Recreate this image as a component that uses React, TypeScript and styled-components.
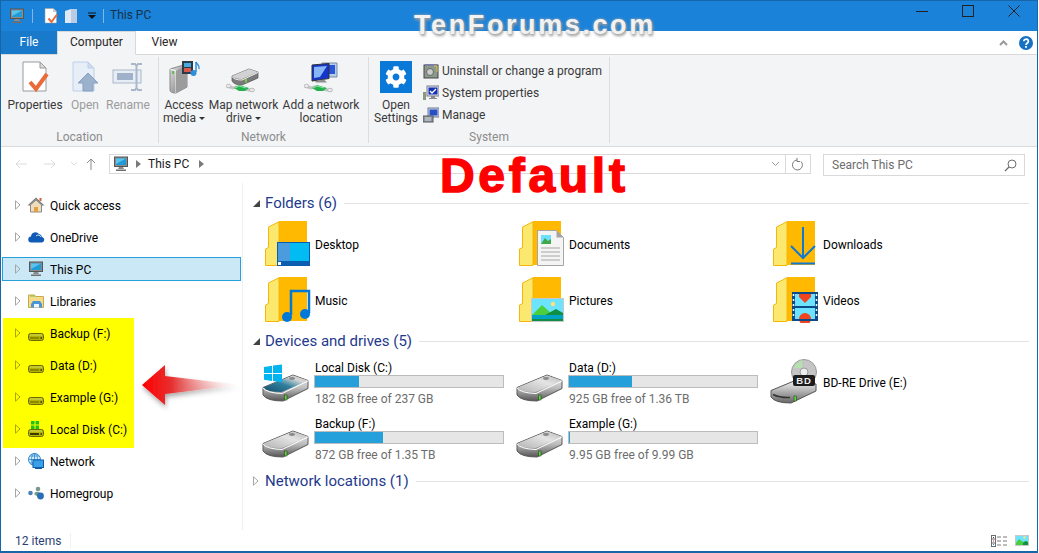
import React from 'react';
import styled, { createGlobalStyle } from 'styled-components';
import { FaCog } from 'react-icons/fa';

const GlobalStyle = createGlobalStyle`
  html, body { margin: 0; padding: 0; background: #fff; }
  * { box-sizing: border-box; }
  svg { display: block; flex: none; }
`;

const Win = styled.div`
  position: relative;
  width: 1038px;
  height: 553px;
  overflow: hidden;
  display: flex;
  flex-direction: column;
  background: #fff;
  border-style: solid;
  border-color: #1766a8;
  border-width: 1px 1px 2px 1px;
  font-family: Roboto, "Noto Sans", sans-serif;
  font-size: 12px;
  color: #000;
`;

const TitleBar = styled.div`
  height: 30px;
  flex: none;
  display: flex;
  align-items: center;
  background: #1a82d9;
  padding-left: 8px;
`;
const TitleSep = styled.div`
  width: 1px;
  height: 14px;
  margin: 0 10px 0 7px;
  background: #7fb6e6;
`;
const TitleIcon = styled.div<{ $ml: number }>`
  margin-left: ${p => p.$ml}px;
`;
const TitleText = styled.span`
  color: #16324a;
  font-size: 12px;
  margin: -2px 0 0 -4px;
`;
const TitleControls = styled.div`
  margin-left: auto;
  display: flex;
  height: 100%;
`;
const ControlBtn = styled.div`
  width: 46px;
  display: flex;
  align-items: flex-start;
  justify-content: center;
  padding-top: 4px;
`;

const TabRow = styled.div`
  height: 24px;
  flex: none;
  display: flex;
  align-items: stretch;
  border-bottom: 1px solid #d9d9d9;
`;
const FileTab = styled.div`
  width: 56px;
  background: #1979ca;
  color: #fff;
  display: flex;
  align-items: center;
  justify-content: center;
  padding-bottom: 2px;
`;
const Tab = styled.div<{ $active?: boolean; $w: number }>`
  width: ${p => p.$w}px;
  height: ${p => (p.$active ? 24 : 23)}px;
  display: flex;
  align-items: center;
  justify-content: center;
  color: #262626;
  padding-bottom: 2px;
  border: ${p => (p.$active ? '1px solid #d9d9d9' : 'none')};
  border-bottom: ${p => (p.$active ? '1px solid #f3f4f6' : 'none')};
  background: ${p => (p.$active ? '#f3f4f6' : '#fff')};
`;
const TabTools = styled.div`
  margin-left: auto;
  display: flex;
  align-items: center;
  gap: 11px;
  padding-right: 4px;
`;

const Ribbon = styled.div`
  height: 92px;
  flex: none;
  display: flex;
  background: #f3f4f6;
  border-bottom: 1px solid #d9dadc;
  padding-top: 2px;
`;
const RGroup = styled.div<{ $w: number; $pl?: number }>`
  width: ${p => p.$w}px;
  height: 86px;
  display: flex;
  flex-direction: column;
  border-right: 1px solid #dcdddf;
  padding-left: ${p => p.$pl ?? 0}px;
`;
const RItems = styled.div`
  flex: 1;
  display: flex;
  align-items: flex-start;
  padding-top: 4px;
`;
const RLabel = styled.div<{ $ml?: number }>`
  height: 14px;
  margin-left: ${p => p.$ml ?? 0}px;
  text-align: center;
  color: #8c8c8c;
  line-height: 16px;
`;
const RBtn = styled.div<{ $w: number; $off?: boolean }>`
  width: ${p => p.$w}px;
  display: flex;
  flex-direction: column;
  align-items: center;
  color: ${p => (p.$off ? '#9b9b9b' : '#3a3a3a')};
  line-height: 13px;
  text-align: center;
  white-space: nowrap;
`;
const RIcon = styled.div`
  height: 32px;
  margin-bottom: 6px;
  display: flex;
  align-items: center;
  justify-content: center;
`;
const Tile = styled.div`
  width: 32px;
  height: 32px;
  background: #0a78d7;
  color: #fff;
  display: flex;
  align-items: center;
  justify-content: center;
`;
const DropMark = styled.span`
  display: inline-block;
  width: 0;
  height: 0;
  margin-left: 3px;
  vertical-align: 2px;
  border-left: 3px solid transparent;
  border-right: 3px solid transparent;
  border-top: 3px solid #333;
`;
const SmallList = styled.div`
  display: flex;
  flex-direction: column;
  gap: 6px;
  margin-top: 2px;
`;
const SmallItem = styled.div`
  height: 16px;
  display: flex;
  align-items: center;
  gap: 3px;
  color: #3a3a3a;
  white-space: nowrap;
`;

const AddressRow = styled.div`
  height: 36px;
  flex: none;
  display: flex;
  align-items: flex-start;
  padding-top: 7px;
`;
const NavArrows = styled.div`
  width: 108px;
  height: 20px;
  display: flex;
  align-items: center;
  padding-left: 14px;
`;
const AddressBox = styled.div`
  width: 702px;
  height: 20px;
  display: flex;
  align-items: center;
  border: 1px solid #d9d9d9;
  padding-left: 3px;
  color: #1a1a1a;
`;
const Crumb = styled.span<{ $l: number }>`
  margin: 0 7px 0 ${p => p.$l}px;
`;
const AddressEnd = styled.div`
  margin-left: auto;
  height: 100%;
  display: flex;
  align-items: center;
`;
const AddressSep = styled.div`
  width: 1px;
  height: 20px;
  margin: 0 6px 0 5px;
  background: #d9d9d9;
`;
const Refresh = styled.div`
  margin-right: 6px;
`;
const SearchBox = styled.div`
  width: 202px;
  height: 22px;
  margin-left: 12px;
  display: flex;
  align-items: center;
  justify-content: space-between;
  border: 1px solid #d9d9d9;
  padding: 0 7px 0 8px;
  color: #6d6d6d;
`;

const Body = styled.div`
  flex: 1;
  min-height: 0;
  display: flex;
`;
const NavPane = styled.div`
  width: 242px;
  flex: none;
  padding-top: 6px;
  border-right: 1px solid #f0f0f0;
`;
const NavRow = styled.div`
  height: 32px;
  display: flex;
  align-items: center;
`;
const NavInner = styled.div<{ $selected?: boolean }>`
  width: 239px;
  height: 24px;
  margin-left: 1px;
  display: flex;
  align-items: center;
  padding-left: 12px;
  border: 1px solid ${p => (p.$selected ? '#26a0da' : 'transparent')};
  background: ${p => (p.$selected ? '#cbe8f6' : 'transparent')};
`;
const NavIconSlot = styled.div`
  width: 22px;
  margin-left: 7px;
  display: flex;
  justify-content: flex-start;
`;
const NavLabel = styled.span`
  padding-top: 2px;
`;
const YellowGroup = styled.div`
  position: relative;
  z-index: 0;
  &::before {
    content: '';
    position: absolute;
    z-index: -1;
    left: 2px;
    top: 1px;
    width: 131px;
    height: 130px;
    background: #ffff00;
  }
`;

const Main = styled.div`
  flex: 1;
  padding-top: 9px;
  padding-left: 10px;
  display: flex;
  flex-direction: column;
`;
const SectionHead = styled.div<{ $mt?: number }>`
  height: 22px;
  margin-top: ${p => p.$mt ?? 0}px;
  display: flex;
  align-items: center;
  color: #1e3a8c;
  font-size: 15px;
  flex: none;
`;
const SectionCaret = styled.div`
  width: 12px;
  display: flex;
`;
const SectionLine = styled.div`
  flex: 1;
  height: 1px;
  margin: 0 8px 0 7px;
  background: #e3e3e3;
`;
const ItemGrid = styled.div`
  display: grid;
  grid-template-columns: repeat(3, 254px);
  grid-auto-rows: 56px;
  margin: 2px 0 0 9px;
`;
const Item = styled.div`
  display: flex;
  align-items: center;
`;
const ItemIcon = styled.div<{ $folder?: boolean }>`
  width: 53px;
  padding-left: ${p => (p.$folder ? 3 : 0)}px;
  flex: none;
`;
const ItemLabel = styled.span`
  padding-top: 2px;
`;
const DriveInfo = styled.div`
  width: 190px;
  margin-left: -1px;
  padding-top: 2px;
`;
const DriveName = styled.div`
  line-height: 15px;
  margin: 2px 0 -2px;
  padding-left: 1px;
  white-space: nowrap;
`;
const Bar = styled.div`
  height: 13px;
  margin: 1px 0 0;
  background: #e6e6e6;
  border: 1px solid #bcbcbc;
`;
const BarFill = styled.div<{ $pct: number }>`
  width: ${p => p.$pct}%;
  height: 100%;
  background: #26a0da;
`;
const DriveFree = styled.div`
  line-height: 16px;
  margin-top: 3px;
  padding-left: 1px;
  color: #6d6d6d;
  white-space: nowrap;
`;

const StatusBar = styled.div`
  height: 21px;
  flex: none;
  display: flex;
  align-items: center;
  padding: 0 8px 0 14px;
  color: #2a3f73;
`;
const StatusSep = styled.div`
  width: 1px;
  height: 15px;
  margin-left: 9px;
  background: #f0f0f0;
`;
const StatusIcons = styled.div`
  margin-left: auto;
  display: flex;
  align-items: center;
  gap: 7px;
`;

const Watermark = styled.div`
  position: absolute;
  left: 413px;
  top: 9px;
  font-family: "Liberation Sans", sans-serif;
  font-weight: 700;
  font-size: 27px;
  letter-spacing: 2.6px;
  color: #f2f2f2;
  text-shadow: 1px 2px 3px #9a9a9a, 0 0 3px #a8a8a8;
  white-space: nowrap;
`;
const DefaultMark = styled.div`
  position: absolute;
  left: 439px;
  top: 145px;
  font-family: "Liberation Sans", sans-serif;
  font-weight: 700;
  font-size: 48px;
  letter-spacing: 3.7px;
  line-height: 60px;
  color: #ff0000;
  -webkit-text-stroke: 1.5px #ff0000;
  white-space: nowrap;
`;
const ArrowMark = styled.div`
  position: absolute;
  left: 138px;
  top: 358px;
`;

/* ---- icons ---- */

const PcIcon = ({ s = 16 }: { s?: number }) => (
  <svg width={s} height={s} viewBox="0 0 16 16">
    <rect x="1.5" y="1" width="13" height="9.5" fill="#8c8c8c" stroke="#555" />
    <path d="M3 2.5h10v6.5H3z" fill="#1f9bd8" />
    <path d="M3 2.5h10L3 8z" fill="#5cc3ec" />
    <path d="M6 11h4l1 2H5z" fill="#8a8a8a" />
    <path d="M3 13.5h10v1.5H3z" fill="#6f6f6f" />
  </svg>
);

const DocCheck = ({ s = 32 }: { s?: number }) => (
  <svg width={s} height={s} viewBox="0 0 32 32">
    <path d="M4 1h17l6 6v23H4z" fill="#fff" stroke="#9a9a9a" />
    <path d="M21 1v6h6z" fill="#dcdcdc" stroke="#9a9a9a" />
    <path d="M11 21l6 7L28 13" fill="none" stroke="#ea6b3a" strokeWidth="4" />
  </svg>
);

const OpenIcon = () => (
  <svg width="30" height="32" viewBox="0 0 30 32">
    <path d="M3 1h15l6 6v23H3z" fill="#e8eef8" stroke="#bcd0ea" />
    <path d="M18 1v6h6z" fill="#cfdcee" stroke="#bcd0ea" />
    <path d="M18 12l10 10h-5v8H13v-8H8z" fill="#9bb1cc" stroke="#86a0bf" />
  </svg>
);

const RenameIcon = () => (
  <svg width="32" height="28" viewBox="0 0 32 28">
    <rect x="1" y="7" width="28" height="13" fill="#e7edf5" stroke="#a9b7c9" />
    <rect x="5" y="10" width="16" height="7" fill="#9fb2c9" />
    <path d="M19 1h4l1.5 2L26 1h4M24.5 3v22M19 27h4l1.5-2 1.500 2h4" fill="none" stroke="#a9b7c9" strokeWidth="2" />
  </svg>
);

const AccessIcon = () => (
  <svg width="34" height="34" viewBox="0 0 34 34">
    <defs>
      <linearGradient id="towerFace" x1="0" y1="0" x2="1" y2="1">
        <stop offset="0" stopColor="#e4e4e4" />
        <stop offset="1" stopColor="#6f6f6f" />
      </linearGradient>
    </defs>
    <path d="M3 9l17-5v23L9 33Q3 33 3 30z" fill="url(#towerFace)" stroke="#8a8a8a" />
    <path d="M3 9l6 2v22" fill="none" stroke="#f4f4f4" />
    <path d="M20 4v23l-11 6V11z" fill="#9c9c9c" />
    <rect x="5" y="11" width="2" height="3" fill="#5fc24e" />
    <rect x="15" y="1" width="11" height="13" fill="#2d3a48" />
    <rect x="17" y="3" width="7" height="4" fill="#49a8de" />
    <rect x="17" y="8" width="7" height="4" fill="#d8584a" />
    <path d="M29 2v10" stroke="#2f8fd8" strokeWidth="1.500" />
    <circle cx="26.500" cy="13" r="3" fill="#2f8fd8" />
    <path d="M29 2c1 3 4 3 3 7" fill="none" stroke="#2f8fd8" strokeWidth="1.500" />
  </svg>
);

const GreenPipe = ({ dx }: { dx: number }) => (
  <g transform={`translate(${dx} 0)`}>
    <path d="M1 25l6 2 4-1 12 3h5" fill="none" stroke="#c4c4c4" strokeWidth="3" />
    <path d="M8 27l5-3 10 3-4 3h-6z" fill="#23b14d" />
    <path d="M9 27l4-2 7 2" fill="none" stroke="#8fe6a8" />
    <ellipse cx="2.500" cy="25" rx="2.500" ry="1.800" fill="#e8e8e8" stroke="#a5a5a5" strokeWidth="0.600" />
    <ellipse cx="26" cy="29" rx="2.500" ry="1.800" fill="#e8e8e8" stroke="#a5a5a5" strokeWidth="0.600" />
  </g>
);

const MapDriveIcon = () => (
  <svg width="36" height="32" viewBox="3 0 36 32">
    <path d="M9 15L26 8l9 3v6L19 24Q11 24 9 20z" fill="#7a7a7a" stroke="#555" strokeWidth="0.700" />
    <path d="M9 15L26 8l9 3-16 7Q11 18 9 15z" fill="#d2d2d2" />
    <path d="M9 15.500Q11 19 19 19l16-7.500" fill="none" stroke="#efefef" />
    <rect x="22" y="18" width="2" height="3.500" fill="#73d13b" />
    <GreenPipe dx={3} />
  </svg>
);

const AddLocationIcon = () => (
  <svg width="34" height="32" viewBox="0 0 34 32">
    <path d="M18 2h15v14H18z" fill="#b6cfe9" stroke="#7a8ea6" />
    <path d="M21 4h10v9H21z" fill="#2a55d8" />
    <path d="M8 4l17-1.500v15L8 20z" fill="#1335c9" stroke="#333" />
    <path d="M10 6l13-1-7 11-6 1z" fill="#86b6f5" />
    <path d="M11 20l9-1.500 3 3H12z" fill="#8f8f8f" />
    <GreenPipe dx={0} />
  </svg>
);

const UninstallIcon = () => (
  <svg width="16" height="16" viewBox="0 0 16 16">
    <rect x="1" y="2" width="14" height="13" fill="#8a9a8a" stroke="#444" />
    <rect x="2" y="1" width="12" height="2" fill="#7c7ea8" />
    <circle cx="7" cy="9" r="3.500" fill="#ccc" stroke="#666" />
    <path d="M11 3h3v6" fill="none" stroke="#e0c040" />
  </svg>
);

const SysPropsIcon = () => (
  <svg width="16" height="16" viewBox="0 0 16 16">
    <rect x="0" y="7" width="3" height="8" fill="#8a9a7a" />
    <rect x="4" y="1" width="12" height="10" fill="#dfe4f0" stroke="#7a7a8a" />
    <rect x="5.500" y="2.500" width="9" height="7" fill="#1530b0" />
    <path d="M7 6l2 2 4-4" fill="none" stroke="#fff" strokeWidth="1.300" />
    <path d="M8 11h4v2h2v1H6v-1h2z" fill="#8a8a8a" />
  </svg>
);

const ManageIcon = () => (
  <svg width="16" height="16" viewBox="0 0 16 16">
    <rect x="5" y="1" width="11" height="9" fill="#c9d3e6" stroke="#6d7a92" />
    <rect x="6.500" y="2.500" width="8" height="6" fill="#2a4fc4" />
    <rect x="0" y="9" width="10" height="6" fill="#8f969e" stroke="#55595f" />
    <path d="M2 11h6M2 13h6" stroke="#d5d8dc" />
  </svg>
);

const HouseIcon = () => (
  <svg width="16" height="16" viewBox="0 0 16 16">
    <path d="M2.500 8v7h11V8L8 3z" fill="#f0dcb8" stroke="#8a8a8a" />
    <path d="M0.500 8.500L8 1.500l7.500 7" fill="none" stroke="#7a7a7a" strokeWidth="1.400" />
    <rect x="6" y="10" width="4" height="5" fill="#e0a044" />
    <rect x="11.500" y="1" width="2" height="3" fill="#e05a3a" />
  </svg>
);

const CloudIcon = () => (
  <svg width="17" height="12" viewBox="0 0 17 12">
    <path d="M3.500 11.500a3 3 0 0 1-.5-6 4.500 4.500 0 0 1 8-2.500 3.500 3.500 0 0 1 3 3 2.800 2.800 0 0 1 0 5.500z" fill="#0f5bb5" />
    <path d="M8 5a3 3 0 0 1 5 1" fill="none" stroke="#fff" strokeWidth="0.800" />
  </svg>
);

const LibraryIcon = () => (
  <svg width="16" height="14" viewBox="0 0 16 14">
    <path d="M0.500 1h6l1 1.500h8v11H0.500z" fill="#f5dc8c" stroke="#c9a84a" />
    <rect x="2" y="1.500" width="5" height="1" fill="#7cc043" />
    <path d="M5 7h7l2 3v3.500H3V10z" fill="#4a95d6" />
    <rect x="6" y="10" width="5" height="3.500" fill="#eef5fb" />
  </svg>
);

const SmallDrive = ({ win }: { win?: boolean }) => (
  <svg width="16" height="16" viewBox="0 0 16 16">
    {win && (
      <path d="M3 0h3.500v3.500H3zM7.500 0H11v3.500H7.500zM3 4.500h3.500V8H3zM7.500 4.500H11V8H7.500z" fill="#1fc21f" />
    )}
    <rect x="0.500" y="8.500" width="15" height="7" rx="2" fill="#b5b500" stroke="#6a6a00" />
    <path d="M2 10h12" stroke="#d8d860" />
    <rect x="2" y="12" width="9" height="2" fill={win ? '#3a3a00' : '#8a8a00'} />
    <rect x="12.500" y="12" width="1.500" height="2" fill="#4a4a00" />
  </svg>
);

const NetworkIcon = () => (
  <svg width="16" height="16" viewBox="0 0 16 16">
    <circle cx="6.500" cy="6.500" r="6" fill="#d7ecfa" stroke="#2a86d0" />
    <path d="M6.500 0.500v12M0.500 6.500h12M2 3h9M2 10h9" stroke="#2a86d0" strokeWidth="0.800" />
    <ellipse cx="6.500" cy="6.500" rx="3" ry="6" fill="none" stroke="#2a86d0" strokeWidth="0.800" />
    <rect x="5" y="7" width="10.500" height="7.500" fill="#3aa0ea" stroke="#0f5fa8" />
    <path d="M7 15.500h7" stroke="#0f5fa8" />
  </svg>
);

const HomegroupIcon = () => (
  <svg width="17" height="14" viewBox="0 0 17 14">
    <circle cx="2.500" cy="7" r="2.300" fill="#4a7fb8" />
    <circle cx="10" cy="3" r="2.300" fill="#7a9a8a" />
    <path d="M6 8a4 3 0 0 1 5-2l3 3-4 2z" fill="#6f9a8c" />
    <circle cx="12.500" cy="10" r="3.400" fill="#2a6fb5" />
  </svg>
);

const Caret = () => (
  <svg width="6" height="10" viewBox="0 0 6 10">
    <path d="M0.500 0.800L5 5 0.500 9.200z" fill="none" stroke="#a6a6a6" />
  </svg>
);
const CaretOnYellow = () => (
  <svg width="6" height="10" viewBox="0 0 6 10">
    <path d="M0.500 0.800L5 5 0.500 9.200z" fill="none" stroke="#a8a800" />
  </svg>
);
const CaretOpen = () => (
  <svg width="7" height="7" viewBox="0 0 7 7">
    <path d="M7 0v7H0z" fill="#444" />
  </svg>
);

const FolderBase = ({ children }: { children?: React.ReactNode }) => (
  <svg width="46" height="46" viewBox="0 0 46 46">
    <rect x="14" y="0" width="28" height="44" fill="#ffb900" />
    <path d="M0.500 44.500V28l3-1.500V6L14 .8v43.700z" fill="#fbe96f" stroke="#f5b70a" />
    {children}
  </svg>
);

const folderArt: Record<string, React.ReactNode> = {
  Desktop: (
    <>
      <rect x="12.500" y="21.500" width="32" height="23" fill="#00bcf2" stroke="#0b5cad" />
      <rect x="13" y="22" width="12" height="18" fill="#4a9cdf" />
      <rect x="13" y="40" width="31" height="4" fill="#0a5fb0" />
      <rect x="13" y="41" width="3" height="3" fill="#fff" />
    </>
  ),
  Documents: (
    <>
      <path d="M18.500 9.500h19l7 7v28h-26z" fill="#f4f4f4" stroke="#a5a5a5" />
      <path d="M37.500 9.500v7h7z" fill="#a5a5a5" />
      <rect x="22" y="14" width="10" height="9" fill="#6ee0ff" />
      <path d="M22 23l4-6 3 3 3-2v5z" fill="#3fa84a" />
      <path d="M22 27h19M22 31h19M22 35h19M22 39h19" stroke="#a5a5a5" />
    </>
  ),
  Downloads: (
    <>
      <path d="M30 6v30M18 25l12 12 12-12" fill="none" stroke="#0f78d4" strokeWidth="2" />
      <path d="M18 42.500h24" stroke="#0f78d4" strokeWidth="2" />
    </>
  ),
  Music: (
    <>
      <path d="M26 38V14h18v22" fill="none" stroke="#0078d7" strokeWidth="2.500" />
      <circle cx="22" cy="40" r="5" fill="#0078d7" />
      <circle cx="40" cy="37" r="5" fill="#0078d7" />
    </>
  ),
  Pictures: (
    <>
      <rect x="12.500" y="21.500" width="32" height="23" fill="#6ce4ff" stroke="#c8c8c8" />
      <circle cx="34" cy="27" r="2.200" fill="#ffe27a" />
      <path d="M13 38l10-10 9 8 5-3 7 5z" fill="#4ccf3f" />
      <path d="M26 38l11-6 7 4v2z" fill="#0f8f45" />
      <rect x="13" y="38" width="31" height="4" fill="#00a3c4" />
      <rect x="13" y="42" width="31" height="2" fill="#0f8f45" />
    </>
  ),
  Videos: (
    <>
      <rect x="19" y="15" width="26" height="29" fill="#0c4a8a" />
      <rect x="22" y="17" width="20" height="12" fill="#6ce4ff" />
      <rect x="22" y="31" width="20" height="11" fill="#6ce4ff" />
      <path d="M26 17h12v3l-6 6-6-6z" fill="#f0441f" />
      <circle cx="32" cy="42" r="6" fill="#f0441f" />
      <rect x="22" y="42" width="20" height="2" fill="#0c4a8a" />
      <path d="M20.500 17v25M43.500 17v25" stroke="#fff" strokeWidth="1.500" strokeDasharray="2 3" />
    </>
  ),
};

const Drive = ({ win }: { win?: boolean }) => (
  <svg width="48" height="44" viewBox="0 0 48 44">
    <defs>
      <linearGradient id="driveFront" x1="0" y1="0" x2="0" y2="1">
        <stop offset="0" stopColor="#f2f2f2" />
        <stop offset="0.500" stopColor="#bdbdbd" />
        <stop offset="1" stopColor="#555" />
      </linearGradient>
      <linearGradient id="driveTop" x1="0" y1="1" x2="1" y2="0">
        <stop offset="0" stopColor="#b4b4b4" />
        <stop offset="0.600" stopColor="#e4e4e4" />
        <stop offset="1" stopColor="#b8b8b8" />
      </linearGradient>
      <linearGradient id="driveWin" x1="0" y1="1" x2="1" y2="0">
        <stop offset="0" stopColor="#17506f" />
        <stop offset="0.450" stopColor="#2f7f9c" />
        <stop offset="0.750" stopColor="#d6d6d6" />
        <stop offset="1" stopColor="#b8b8b8" />
      </linearGradient>
    </defs>
    <path d="M1 27.500L31 15l15 5.500v8L21 41Q5 41 1 35z" fill="url(#driveFront)" stroke="#5a5a5a" />
    <path d="M1.500 27.500L31 15.500l15 5L19.500 32Q5 32 1.500 27.500z" fill={win ? 'url(#driveWin)' : 'url(#driveTop)'} />
    <path d="M1 28Q5 33 20 33.500L46 21" fill="none" stroke="#fff" />
    <ellipse cx="30" cy="18.500" rx="3" ry="1.400" fill="#8a8a8a" />
    <rect x="22.500" y="35" width="2.500" height="5" fill="#5fd13b" stroke="#1d3a12" strokeWidth="0.500" />
    {win && (
      <path d="M2 7l8-1.200v7.200H2zM11 5.600L20 4.500V13h-9zM2 14h8v7l-8-1.200zM11 14h9v8.200l-9-1.200z" fill="#00b4f0" />
    )}
  </svg>
);

const BdDrive = () => (
  <svg width="48" height="46" viewBox="0 0 48 46">
    <defs>
      <linearGradient id="bdFront" x1="0" y1="0" x2="0" y2="1">
        <stop offset="0" stopColor="#f2f2f2" />
        <stop offset="1" stopColor="#666" />
      </linearGradient>
    </defs>
    <circle cx="34" cy="13" r="12.500" fill="#c5c5c5" stroke="#9a9a9a" />
    <path d="M24 9a12 12 0 0 1 8-8v8z" fill="#b6e0b0" />
    <circle cx="34" cy="13" r="4" fill="#eee" stroke="#9a9a9a" />
    <path d="M1 31.500L24 22l22 3v7L21 44Q5 44 1 38z" fill="url(#bdFront)" stroke="#555" />
    <path d="M3 35.500Q10 39 20 38.500" fill="none" stroke="#333" strokeWidth="1.500" />
    <rect x="24" y="37" width="2.500" height="5" fill="#5fd13b" stroke="#1d3a12" strokeWidth="0.500" />
    <rect x="23" y="16" width="22" height="11" rx="2" fill="#1c1c1c" />
    <text x="34" y="25" textAnchor="middle" fontSize="9.500" fontWeight="700" fill="#eee" fontFamily="Liberation Sans, sans-serif" letterSpacing="1">BD</text>
  </svg>
);

const Chevron = ({ color = '#bdbdbd' }: { color?: string }) => (
  <svg width="9" height="6" viewBox="0 0 9 6">
    <path d="M1 1l3.500 3.500L8 1" fill="none" stroke={color} />
  </svg>
);
const BlackArrow = () => (
  <svg width="5" height="8" viewBox="0 0 5 8">
    <path d="M0 0l5 4-5 4z" fill="#7a7a7a" />
  </svg>
);

const folders = ['Desktop', 'Documents', 'Downloads', 'Music', 'Pictures', 'Videos'];

const drives = [
  { name: 'Local Disk (C:)', free: '182 GB free of 237 GB', pct: 23.5, win: true },
  { name: 'Data (D:)', free: '925 GB free of 1.36 TB', pct: 33.5 },
  { name: 'BD-RE Drive (E:)', bd: true },
  { name: 'Backup (F:)', free: '872 GB free of 1.35 TB', pct: 36 },
  { name: 'Example (G:)', free: '9.95 GB free of 9.99 GB', pct: 0.4 },
];

const topNav = [
  { label: 'Quick access', icon: <HouseIcon /> },
  { label: 'OneDrive', icon: <CloudIcon /> },
  { label: 'This PC', icon: <PcIcon />, selected: true },
  { label: 'Libraries', icon: <LibraryIcon /> },
];
const driveNav = ['Backup (F:)', 'Data (D:)', 'Example (G:)', 'Local Disk (C:)'];
const bottomNav = [
  { label: 'Network', icon: <NetworkIcon /> },
  { label: 'Homegroup', icon: <HomegroupIcon /> },
];

export default function App() {
  return (
    <>
      <GlobalStyle />
      <Win>
        <TitleBar>
          <PcIcon />
          <TitleSep />
          <DocCheck s={16} />
          <TitleIcon $ml={5}>
            <svg width="16" height="16" viewBox="0 0 16 16">
              <path d="M1 3l6-2v14H1z" fill="#dfe9f6" />
              <path d="M7 1h6v14H7z" fill="#b9cce4" />
            </svg>
          </TitleIcon>
          <TitleIcon $ml={8}>
            <svg width="8" height="8" viewBox="0 0 8 8">
              <path d="M0 1h8" stroke="#111" />
              <path d="M0 3h8L4 7z" fill="#111" />
            </svg>
          </TitleIcon>
          <TitleSep />
          <TitleText>This PC</TitleText>
          <TitleControls>
            <ControlBtn>
              <svg width="12" height="12" viewBox="0 0 12 12"><path d="M0 6.500h12" stroke="#222" /></svg>
            </ControlBtn>
            <ControlBtn>
              <svg width="12" height="12" viewBox="0 0 12 12"><rect x="0.500" y="0.500" width="11" height="11" fill="none" stroke="#222" /></svg>
            </ControlBtn>
            <ControlBtn>
              <svg width="12" height="12" viewBox="0 0 12 12"><path d="M0.500 0.500l11 11M11.500 0.500l-11 11" stroke="#222" /></svg>
            </ControlBtn>
          </TitleControls>
        </TitleBar>

        <TabRow>
          <FileTab>File</FileTab>
          <Tab $active $w={79}>Computer</Tab>
          <Tab $w={57}>View</Tab>
          <TabTools>
            <svg width="9" height="6" viewBox="0 0 9 6"><path d="M1 5l3.500-3.500L8 5" fill="none" stroke="#9a9a9a" strokeWidth="2" /></svg>
            <svg width="14" height="14" viewBox="0 0 14 14">
              <circle cx="7" cy="7" r="7" fill="#1670c4" />
              <path d="M4.800 5.200a2.300 2.100 0 1 1 3.500 1.800c-.9.600-1.300 1-1.300 2" fill="none" stroke="#fff" strokeWidth="1.700" />
              <rect x="6.100" y="10" width="1.800" height="1.800" fill="#fff" />
            </svg>
          </TabTools>
        </TabRow>

        <Ribbon>
          <RGroup $w={158} $pl={4}>
            <RItems>
              <RBtn $w={60}><RIcon><DocCheck /></RIcon>Properties</RBtn>
              <RBtn $w={40} $off><RIcon><OpenIcon /></RIcon>Open</RBtn>
              <RBtn $w={46} $off><RIcon><RenameIcon /></RIcon>Rename</RBtn>
            </RItems>
            <RLabel $ml={-4}>Location</RLabel>
          </RGroup>
          <RGroup $w={210} $pl={5}>
            <RItems>
              <RBtn $w={40}><RIcon><AccessIcon /></RIcon>Access<span>media<DropMark /></span></RBtn>
              <RBtn $w={79}><RIcon><MapDriveIcon /></RIcon>Map network<span>drive<DropMark /></span></RBtn>
              <RBtn $w={76}><RIcon><AddLocationIcon /></RIcon>Add a network<span>location</span></RBtn>
            </RItems>
            <RLabel $ml={-5}>Network</RLabel>
          </RGroup>
          <RGroup $w={241}>
            <RItems>
              <RBtn $w={54}>
                <RIcon><Tile><FaCog size={22} /></Tile></RIcon>
                Open<span>Settings</span>
              </RBtn>
              <SmallList>
                <SmallItem><UninstallIcon />Uninstall or change a program</SmallItem>
                <SmallItem><SysPropsIcon />System properties</SmallItem>
                <SmallItem><ManageIcon />Manage</SmallItem>
              </SmallList>
            </RItems>
            <RLabel>System</RLabel>
          </RGroup>
        </Ribbon>

        <AddressRow>
          <NavArrows>
            <svg width="80" height="14" viewBox="0 0 80 14">
              <path d="M12 7H1M5 3L1 7l4 4M29 7h11M36 3l4 4-4 4M56 5l3 3 3-3" fill="none" stroke="#dcdcdc" />
              <path d="M76 13V2M72 6l4-4 4 4" fill="none" stroke="#8a8a8a" />
            </svg>
          </NavArrows>
          <AddressBox>
            <PcIcon />
            <Crumb $l={7}><BlackArrow /></Crumb>
            <span>This PC</span>
            <Crumb $l={10}><BlackArrow /></Crumb>
            <AddressEnd>
              <Chevron color="#9a9a9a" />
              <AddressSep />
              <Refresh>
                <svg width="12" height="13" viewBox="0 0 12 13">
                  <path d="M9 3.500a5 5 0 1 1-4-1.500M5 0v3.500h3" fill="none" stroke="#7a7a7a" />
                </svg>
              </Refresh>
            </AddressEnd>
          </AddressBox>
          <SearchBox>
            <span>Search This PC</span>
            <svg width="13" height="13" viewBox="0 0 13 13">
              <circle cx="8" cy="5" r="4" fill="none" stroke="#6d6d6d" />
              <path d="M5 8l-4 4" stroke="#6d6d6d" strokeWidth="1.300" />
            </svg>
          </SearchBox>
        </AddressRow>

        <Body>
          <NavPane>
            {topNav.map(n => (
              <NavRow key={n.label}>
                <NavInner $selected={n.selected}>
                  <Caret />
                  <NavIconSlot>{n.icon}</NavIconSlot>
                  <NavLabel>{n.label}</NavLabel>
                </NavInner>
              </NavRow>
            ))}
            <YellowGroup>
              {driveNav.map(label => (
                <NavRow key={label}>
                  <NavInner>
                    <CaretOnYellow />
                    <NavIconSlot><SmallDrive win={label.startsWith('Local')} /></NavIconSlot>
                    <NavLabel>{label}</NavLabel>
                  </NavInner>
                </NavRow>
              ))}
            </YellowGroup>
            {bottomNav.map(n => (
              <NavRow key={n.label}>
                <NavInner>
                  <Caret />
                  <NavIconSlot>{n.icon}</NavIconSlot>
                  <NavLabel>{n.label}</NavLabel>
                </NavInner>
              </NavRow>
            ))}
          </NavPane>

          <Main>
            <SectionHead>
              <SectionCaret><CaretOpen /></SectionCaret>
              Folders (6)
              <SectionLine />
            </SectionHead>
            <ItemGrid>
              {folders.map(f => (
                <Item key={f}>
                  <ItemIcon $folder><FolderBase>{folderArt[f]}</FolderBase></ItemIcon>
                  <ItemLabel>{f}</ItemLabel>
                </Item>
              ))}
            </ItemGrid>
            <SectionHead $mt={2}>
              <SectionCaret><CaretOpen /></SectionCaret>
              Devices and drives (5)
              <SectionLine />
            </SectionHead>
            <ItemGrid>
              {drives.map(d => (
                <Item key={d.name}>
                  <ItemIcon>{d.bd ? <BdDrive /> : <Drive win={d.win} />}</ItemIcon>
                  {d.bd ? <ItemLabel>{d.name}</ItemLabel> : (
                    <DriveInfo>
                      <DriveName>{d.name}</DriveName>
                      <Bar><BarFill $pct={d.pct ?? 0} /></Bar>
                      <DriveFree>{d.free}</DriveFree>
                    </DriveInfo>
                  )}
                </Item>
              ))}
            </ItemGrid>
            <SectionHead $mt={4}>
              <SectionCaret><Caret /></SectionCaret>
              Network locations (1)
              <SectionLine />
            </SectionHead>
          </Main>
        </Body>

        <StatusBar>
          12 items
          <StatusSep />
          <StatusIcons>
            <svg width="17" height="12" viewBox="0 0 17 12">
              <rect x="0.500" y="0.500" width="4" height="11" fill="#fff" stroke="#6d6d6d" />
              <path d="M1 4h3M1 8h3" stroke="#6d6d6d" />
              <rect x="2" y="2" width="1" height="1" fill="#555" />
              <rect x="2" y="5.500" width="1" height="1" fill="#d03030" />
              <rect x="2" y="9" width="1" height="1" fill="#20a0d0" />
              <path d="M6 2h4M12 2h4M6 6h4M12 6h4M6 10h4M12 10h4" stroke="#7a7a7a" />
            </svg>
            <svg width="14" height="11" viewBox="0 0 14 11">
              <rect width="14" height="11" fill="#c8c8c8" />
              <rect x="1" y="1" width="12" height="9" fill="#6ce4ff" />
              <path d="M1 8l3-4 4 3 2-1 3 2v2H1z" fill="#4ccf3f" />
              <path d="M8 8l3-2 2 1v3H8z" fill="#0f8f45" />
              <circle cx="9.500" cy="2.500" r="1.200" fill="#ffe27a" />
            </svg>
          </StatusIcons>
        </StatusBar>

        <Watermark>TenForums.com</Watermark>
        <DefaultMark>Default</DefaultMark>
        <ArrowMark>
          <svg width="110" height="54" viewBox="0 0 110 54">
            <defs>
              <linearGradient id="arrowFill" x1="0" y1="0" x2="1" y2="0">
                <stop offset="0" stopColor="#ff0000" />
                <stop offset="0.300" stopColor="#e63030" />
                <stop offset="1" stopColor="#ffffff" stopOpacity="0.100" />
              </linearGradient>
              <filter id="arrowShadow" x="-20%" y="-30%" width="140%" height="170%">
                <feDropShadow dx="1" dy="3" stdDeviation="2.500" floodColor="#000" floodOpacity="0.350" />
              </filter>
            </defs>
            <path d="M3 26L26 6v11l76 9-76 9v11z" fill="url(#arrowFill)" filter="url(#arrowShadow)" />
          </svg>
        </ArrowMark>
      </Win>
    </>
  );
}
